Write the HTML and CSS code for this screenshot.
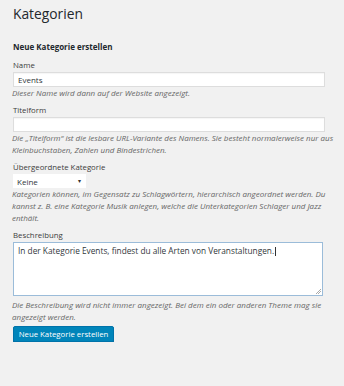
FILE: index.html
```html
<!DOCTYPE html>
<html lang="de">
<head>
  <meta charset="UTF-8">
  <meta name="viewport" content="width=device-width, initial-scale=1.0">
  <title>Kategorien</title>
  <link rel="stylesheet" href="styles.css">
</head>
<body>

  <h1>Kategorien</h1>

  <div class="form-wrap">
    <h2>Neue Kategorie erstellen</h2>

    <!-- Name -->
    <div class="form-field first">
      <label for="tag-name">Name</label>
      <input type="text" id="tag-name" value="Events">
      <p class="hint">Dieser Name wird dann auf der Website angezeigt.</p>
    </div>

    <!-- Titelform -->
    <div class="form-field">
      <label for="tag-slug">Titelform</label>
      <input type="text" id="tag-slug" value="">
      <p class="hint">Die „Titelform“ ist die lesbare URL-Variante des Namens. Sie besteht normalerweise nur aus Kleinbuchstaben, Zahlen und Bindestrichen.</p>
    </div>

    <!-- Elternkategorie -->
    <div class="form-field">
      <label>Übergeordnete Kategorie</label>
      <div class="select">
        <span>Keine</span>
        <span class="arrow">▾</span>
      </div>
      <p class="hint">Kategorien können, im Gegensatz zu Schlagwörtern, hierarchisch angeordnet werden. Du kannst z. B. eine Kategorie Musik anlegen, welche die Unterkategorien Schlager und Jazz enthält.</p>
    </div>

    <!-- Beschreibung -->
    <div class="form-field">
      <label for="tag-description">Beschreibung</label>
      <div class="textarea" id="tag-description">In der Kategorie Events, findest du alle Arten von Veranstaltungen.<span class="caret"></span></div>
      <p class="hint spaced">Die Beschreibung wird nicht immer angezeigt. Bei dem ein oder anderen Theme mag sie angezeigt werden.</p>
    </div>

    <button class="button">Neue Kategorie erstellen</button>
  </div>

</body>
</html>
```

FILE: styles.css
```css
/* Variables */
:root {
  --bg-color: #f1f1f1;
  --text-color: #23282d;
  --label-color: #3c3c3c;
  --hint-color: #666;
  --border-color: #ddd;
  --primary-color: #0085ba;
}

/* General */
body {
  font-family: 'Open Sans', sans-serif;
  background-color: var(--bg-color);
  color: var(--text-color);
  margin: 0;
  padding: 0 12px;
}

h1 {
  font-size: 13.8px;
  font-weight: 400;
  line-height: 20px;
  margin: 4px 0 0 1px;
}

h2 {
  font-size: 8px;
  font-weight: 700;
  line-height: 10px;
  margin: 18px 0 0 1px;
}

.form-wrap {
  width: 328px;
}

/* Fields */
.form-field {
  margin-top: 6px;
}

.form-field.first {
  margin-top: 8px;
}

label {
  display: block;
  font-size: 7.8px;
  line-height: 10px;
  color: var(--label-color);
  margin: 0 0 2px 1px;
}

input[type="text"] {
  display: block;
  box-sizing: border-box;
  width: 312px;
  height: 15px;
  margin: 0 0 0 1px;
  padding: 0 4px;
  border: 1px solid var(--border-color);
  background-color: #fff;
  font-family: inherit;
  font-size: 8px;
  color: #32373c;
  box-shadow: inset 0 1px 1px rgba(0, 0, 0, 0.04);
}

.select {
  display: flex;
  justify-content: space-between;
  align-items: center;
  box-sizing: border-box;
  width: 73px;
  height: 14px;
  margin-left: 1px;
  padding: 0 5px 0 4px;
  background-color: #fff;
  font-size: 8px;
  color: #32373c;
}

.select .arrow {
  font-size: 6px;
  color: #333;
}

.textarea {
  box-sizing: border-box;
  width: 310px;
  height: 54px;
  margin-left: 1px;
  padding: 2px 4px;
  border: 1px solid #9bbcd9;
  background-color: #fff;
  font-size: 8.3px;
  line-height: 11px;
  color: #32373c;
  overflow: hidden;
  position: relative;
}

/* Griff zum Vergrößern */
.textarea::after {
  content: '';
  position: absolute;
  right: 1px;
  bottom: 1px;
  width: 5px;
  height: 5px;
  background: linear-gradient(135deg, transparent 45%, #aaa 45%, #aaa 55%, transparent 55%, transparent 70%, #aaa 70%, #aaa 80%, transparent 80%);
}

.caret {
  display: inline-block;
  width: 1px;
  height: 9px;
  margin-left: 1px;
  vertical-align: -2px;
  background-color: #333;
}

.hint {
  font-size: 8px;
  font-style: italic;
  line-height: 12px;
  color: var(--hint-color);
  margin: 0;
}

.hint.spaced {
  margin-top: 3px;
}

/* Button */
.button {
  display: block;
  margin: 3px 0 0 1px;
  width: 101px;
  height: 16px;
  padding: 0;
  background-color: var(--primary-color);
  border: 1px solid #0073aa;
  border-radius: 2px;
  color: #fff;
  font-family: inherit;
  font-size: 7.8px;
  cursor: pointer;
  box-shadow: 0 1px 0 #006799;
}

.button:hover {
  background-color: #008ec2;
}
```
